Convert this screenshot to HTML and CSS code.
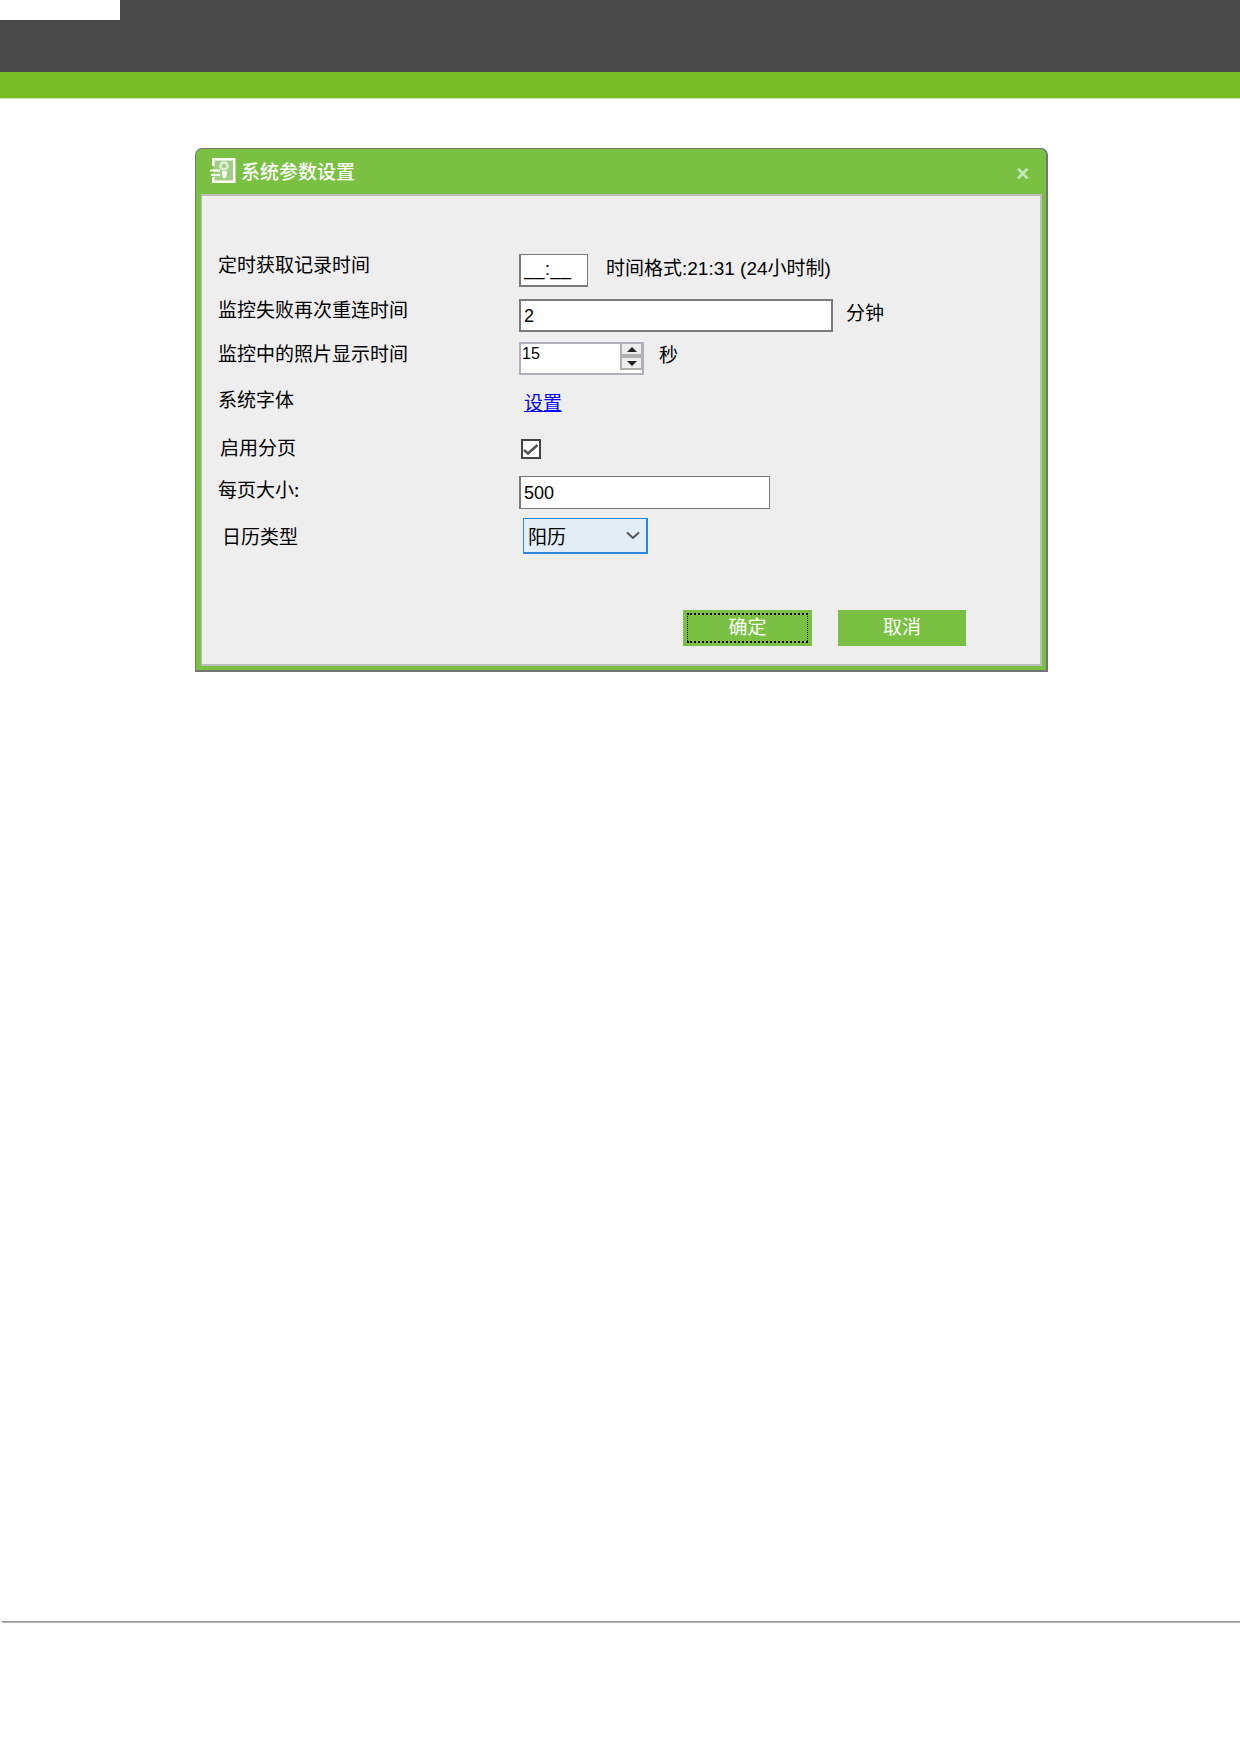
FILE: index.html
```html
<!DOCTYPE html>
<html lang="zh">
<head>
<meta charset="utf-8">
<title>系统参数设置</title>
<link rel="stylesheet" href="styles.css">
</head>
<body>
<header class="banner">
  <div class="banner-dark"><div class="banner-tab"></div></div>
  <div class="banner-green"></div>
</header>
<main class="stage">
  <section class="dialog">
    <div class="titlebar">
      <svg class="title-icon" width="26" height="25" viewBox="0 0 26 25">
        <rect x="3" y="1" width="21" height="22" fill="#a4cc88"/>
        <path d="M2 8V0h23.500v25H2v-6h2.500v3.500h18.500V2.500H4.500V8z" fill="#fff"/>
        <circle cx="14" cy="8" r="3.500" fill="none" stroke="#dff0d2" stroke-width="2.500"/>
        <path d="M12 13h5v3l-1 4h-3l-1-4z" fill="#f4faee"/>
        <path d="M0 11.500h10v2H0zM1 16h9v2H1z" fill="#fff"/>
      </svg>
      <span class="title-text">系统参数设置</span>
      <span class="close">×</span>
    </div>
    <div class="body">
      <div class="row row-time">
        <span class="label">定时获取记录时间</span>
        <div class="field">
          <div class="box box-time">__:__</div>
          <span class="hint">时间格式:21:31 (24小时制)</span>
        </div>
      </div>
      <div class="row row-retry">
        <span class="label">监控失败再次重连时间</span>
        <div class="field">
          <div class="box box-wide">2</div>
          <span class="unit">分钟</span>
        </div>
      </div>
      <div class="row row-photo">
        <span class="label">监控中的照片显示时间</span>
        <div class="field">
          <div class="spin">
            <span class="spin-value">15</span>
            <span class="spin-btns">
              <span class="spin-btn"><i class="tri tri-up"></i></span>
              <span class="spin-btn"><i class="tri tri-down"></i></span>
            </span>
          </div>
          <span class="unit unit-sec">秒</span>
        </div>
      </div>
      <div class="row row-font">
        <span class="label">系统字体</span>
        <div class="field"><a class="link" href="#">设置</a></div>
      </div>
      <div class="row row-page">
        <span class="label indent-2">启用分页</span>
        <div class="field">
          <span class="check">
            <svg width="16" height="16" viewBox="0 0 16 16"><path d="M1 9l4 3.500L14.500 4" fill="none" stroke="#555" stroke-width="2.500"/></svg>
          </span>
        </div>
      </div>
      <div class="row row-size">
        <span class="label">每页大小:</span>
        <div class="field"><div class="box box-mid">500</div></div>
      </div>
      <div class="row row-cal">
        <span class="label indent-4">日历类型</span>
        <div class="field">
          <div class="select">
            <span>阳历</span>
            <svg width="14" height="9" viewBox="0 0 14 9"><path d="M1 1.500L7 7l6-5.500" fill="none" stroke="#555" stroke-width="2"/></svg>
          </div>
        </div>
      </div>
      <div class="actions">
        <button class="btn btn-focus" type="button"><span class="btn-inner">确定</span></button>
        <button class="btn" type="button"><span class="btn-inner">取消</span></button>
      </div>
    </div>
  </section>
</main>
<footer class="foot"><div class="foot-line"></div></footer>
</body>
</html>
```
FILE: styles.css
```css
* { box-sizing: border-box; }
html, body { margin: 0; padding: 0; background: #fff; }
body {
  width: 1240px;
  height: 1754px;
  font-family: "Noto Sans CJK SC", "Liberation Sans", sans-serif;
  color: #000;
  display: flex;
  flex-direction: column;
  overflow: hidden;
}
.banner-dark { height: 72px; background: #494949; }
.banner-tab { width: 120px; height: 20px; background: #fff; }
.banner-green { height: 27px; background: #78bc28; border-bottom: 1px solid #c8e4a8; }

.stage { flex: 1; padding: 49px 0 0 195px; }
.dialog {
  width: 853px;
  height: 524px;
  background: #7ac143;
  border: 1px solid #757575;
  border-width: 1px 2px 2px 1px;
  border-radius: 7px 7px 0 0;
  display: flex;
  flex-direction: column;
  padding: 0 4px 4px 5px;
}
.titlebar {
  height: 45px;
  display: flex;
  align-items: center;
  padding: 0 0 0 9px;
  color: #fff;
}
.title-icon { flex: none; margin-right: 5px; margin-bottom: 2px; }
.title-text { font-size: 19px; font-weight: 500; line-height: 24px; margin-bottom: 2px; }
.close {
  margin-left: auto;
  margin-right: 13px;
  margin-top: 4px;
  font-family: "Liberation Sans", sans-serif;
  font-size: 22px;
  line-height: 22px;
  color: #c4e8c0;
  font-weight: 700;
}

.body {
  flex: 1;
  background: #eee;
  border: 2px solid #bdbdbd;
  border-width: 2px 2px 2px 1px;
  display: flex;
  flex-direction: column;
  padding: 58px 0 0 16px;
}
.row { display: flex; align-items: center; }
.row-time { height: 33px; }
.row-retry { height: 33px; margin-top: 12px; }
.row-photo { height: 33px; margin-top: 10px; }
.row-font { height: 33px; margin-top: 12px; }
.row-page { height: 33px; margin-top: 12px; }
.row-size { height: 33px; margin-top: 11px; }
.row-cal { height: 36px; margin-top: 9px; }

.label {
  width: 301px;
  flex: none;
  font-size: 19px;
  line-height: 24px;
  white-space: nowrap;
}
.row-time .label, .row-retry .label { padding-bottom: 14px; }
.row-photo .label { padding-bottom: 12px; }
.row-font .label { padding-bottom: 10px; }
.row-page .label { padding-bottom: 4px; }
.row-size .label { padding-bottom: 8px; }
.indent-2 { padding-left: 2px; }
.indent-4 { padding-left: 4px; }

.field { display: flex; align-items: center; }
.box {
  height: 33px;
  background: #fff;
  border: 2px solid #7a7a7a;
  border-width: 1px 1px 2px 2px;
  font-family: "Liberation Sans", sans-serif;
  font-size: 18px;
  line-height: 30px;
  padding-left: 3px;
}
.box-time { width: 69px; letter-spacing: 0.5px; line-height: 28px; }
.box-wide { width: 314px; border-width: 2px; }
.box-mid { width: 251px; border-width: 1px 1px 1px 2px; line-height: 32px; }
.hint {
  font-family: "Liberation Sans", "Noto Sans CJK SC", sans-serif;
  font-size: 19px;
  line-height: 24px;
  margin-left: 18px;
  padding-bottom: 4px;
  white-space: nowrap;
}
.unit { font-size: 19px; line-height: 24px; margin-left: 13px; padding-bottom: 8px; }
.unit-sec { margin-left: 15px; padding-bottom: 10px; }

.spin {
  width: 125px;
  height: 33px;
  background: #fff;
  border: 2px solid #b0b0b8;
  display: flex;
  justify-content: space-between;
}
.spin-value { font-family: "Liberation Sans", sans-serif; font-size: 16px; line-height: 20px; padding-left: 1px; }
.spin-btns {
  width: 22px;
  height: 26px;
  display: flex;
  flex-direction: column;
  gap: 4px;
  padding: 0 1px 2px 2px;
  background: #b0b0b0;
}
.spin-btn { flex: 1; background: #eee; display: flex; align-items: center; justify-content: center; }
.tri { width: 0; height: 0; border-left: 5px solid transparent; border-right: 5px solid transparent; }
.tri-up { border-bottom: 5px solid #222; }
.tri-down { border-top: 5px solid #222; }

.link { font-size: 19px; line-height: 24px; color: #0000ee; text-decoration: underline; margin-left: 5px; }
.row-font .field { padding-bottom: 4px; }

.check {
  width: 20px;
  height: 20px;
  margin-left: 2px;
  background: #fff;
  border: 2px solid #444;
  display: flex;
  align-items: center;
  justify-content: center;
}
.select {
  width: 125px;
  height: 36px;
  margin-left: 4px;
  background: #e3edf6;
  border: 2px solid #2a86d6;
  border-width: 1px 2px 2px 1px;
  display: flex;
  align-items: center;
  justify-content: space-between;
  padding: 0 6px 0 4px;
  font-size: 19px;
}

.actions { display: flex; gap: 26px; margin-top: 56px; padding-left: 465px; }
.btn {
  width: 128px;
  height: 36px;
  padding: 3px 4px;
  border: 0;
  background: #7ac143;
  color: #fff;
  font-family: inherit;
  font-size: 19px;
  display: flex;
}
.btn-focus { width: 129px; }
.btn-inner { flex: 1; display: flex; align-items: center; justify-content: center; line-height: 24px; padding-bottom: 4px; }
.btn-focus .btn-inner { border-style: dotted; border-color: #000; border-width: 2px 1px; }

.foot { height: 133px; }
.foot-line { margin-left: 2px; height: 2px; background: linear-gradient(#8a8a8a, #c4c4c4); }
```
